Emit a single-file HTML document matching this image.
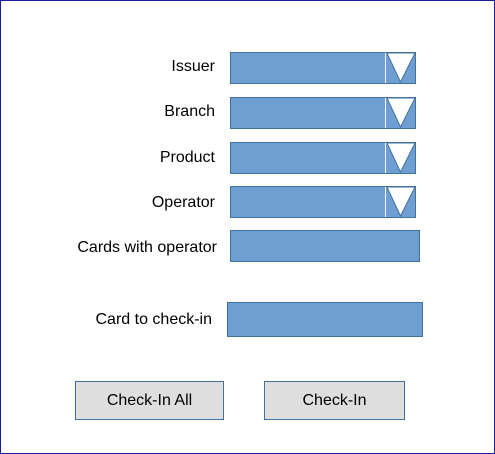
<!DOCTYPE html><html><head><style>
body{margin:0;width:495px;height:454px;position:relative;background:#fff;font-family:"Liberation Sans",sans-serif;overflow:hidden}
.f{position:absolute;left:0;top:0;width:493px;height:452px;border:1px solid #1a1a9a}
.b{position:absolute;background:#6f9fd2;border:1px solid #41719c;box-sizing:border-box}
.l{position:absolute;font-size:16px;color:#000;text-align:right;width:200px}
.d{position:absolute;top:0;right:0;width:30px;height:100%;border-left:1px solid #fff;box-sizing:border-box}
.btn{position:absolute;background:#dedede;border:1px solid #41719c;box-sizing:border-box;font-size:16px;text-align:center;line-height:38px}
</style></head><body><div class="f"></div>
<div class="l" style="left:15px;top:58px">Issuer</div>
<div class="l" style="left:15px;top:103px">Branch</div>
<div class="l" style="left:15px;top:149px">Product</div>
<div class="l" style="left:15px;top:194px">Operator</div>
<div class="l" style="left:17px;top:239px">Cards with operator</div>
<div class="l" style="left:12px;top:311px">Card to check-in</div>
<div class="b" style="left:230px;top:52px;width:186px;height:32px"><svg class="d" viewBox="0 0 30 30" preserveAspectRatio="none"><polygon points="1,0 30,0 15,29" fill="#fff" stroke="#41719c" stroke-width="1"/></svg></div>
<div class="b" style="left:230px;top:97px;width:186px;height:32px"><svg class="d" viewBox="0 0 30 30" preserveAspectRatio="none"><polygon points="1,0 30,0 15,29" fill="#fff" stroke="#41719c" stroke-width="1"/></svg></div>
<div class="b" style="left:230px;top:142px;width:186px;height:32px"><svg class="d" viewBox="0 0 30 30" preserveAspectRatio="none"><polygon points="1,0 30,0 15,29" fill="#fff" stroke="#41719c" stroke-width="1"/></svg></div>
<div class="b" style="left:230px;top:186px;width:186px;height:32px"><svg class="d" viewBox="0 0 30 30" preserveAspectRatio="none"><polygon points="1,0 30,0 15,29" fill="#fff" stroke="#41719c" stroke-width="1"/></svg></div>
<div class="b" style="left:230px;top:230px;width:190px;height:32px"></div>
<div class="b" style="left:227px;top:302px;width:196px;height:35px"></div>
<div class="btn" style="left:75px;top:381px;width:149px;height:39px">Check-In All</div>
<div class="btn" style="left:264px;top:381px;width:141px;height:39px">Check-In</div>
</body></html>
